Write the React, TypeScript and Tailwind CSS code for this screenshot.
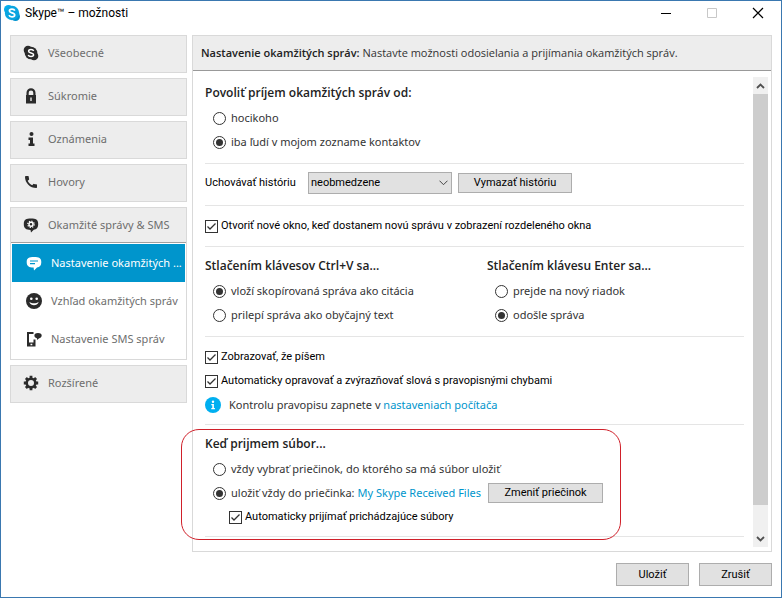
import type { ReactNode } from "react";
import { MdCall } from "react-icons/md";

function SkypeIcon() {
  return (
    <svg width="16" height="16" viewBox="0 0 16 16">
      <circle cx="5" cy="5" r="4.300" fill="#2b2b2b" />
      <circle cx="11" cy="11" r="4.300" fill="#2b2b2b" />
      <circle cx="8" cy="8" r="6.300" fill="#2b2b2b" />
      <path
        d="M10.700 5.900C10.200 4.900 9.300 4.600 8 4.600c-1.400 0-2.400.5-2.400 1.600 0 2.300 5 1.200 5 3.600 0 1.200-1.200 1.700-2.600 1.700-1.500 0-2.400-.5-2.800-1.600"
        fill="none"
        stroke="#fff"
        strokeWidth="1.500"
      />
    </svg>
  );
}

function LockIcon() {
  return (
    <svg width="16" height="16" viewBox="0 0 16 16" fill="#2b2b2b">
      <path
        fillRule="evenodd"
        d="M3.500 7V4.800a4.500 4.500 0 0 1 9 0V7h.5v8.500H3V7zM5.700 7h4.600V4.800a2.300 2.300 0 0 0-4.600 0zM7.300 9.500v3.500h1.400V9.500z"
      />
    </svg>
  );
}

function InfoIcon() {
  return (
    <svg width="16" height="16" viewBox="0 0 16 16" fill="#2b2b2b">
      <circle cx="8.500" cy="3" r="2" />
      <path d="M5.500 6.500H10v6h1.500V15h-6v-2.500H7V9H5.500z" />
    </svg>
  );
}

function BubbleGearIcon() {
  return (
    <svg width="16" height="16" viewBox="0 0 16 16">
      <path
        d="M8 1.500c4.800 0 7.200 1 7.200 5.700 0 3.500-1.600 5.100-4.400 5.500L8 15.500l-.5-2.600C3 12.800.8 11.200.8 7.200.8 2.500 3.200 1.500 8 1.500z"
        fill="#2b2b2b"
      />
      <circle cx="8" cy="7.300" r="2" fill="none" stroke="#fff" strokeWidth="1.400" />
      <circle cx="8" cy="7.300" r="3.200" fill="none" stroke="#fff" strokeWidth="1.200" strokeDasharray="1.250 1.263" />
    </svg>
  );
}

function BubbleIcon() {
  return (
    <svg width="16" height="16" viewBox="0 0 16 16">
      <path
        d="M8 2c5 0 7.300 1 7.300 5.200 0 3.500-1.600 4.900-4.300 5.200L8 15.500l-.4-3C2.800 12.500.7 11 .7 7.200.7 3 3 2 8 2z"
        fill="#fff"
      />
      <path d="M4 6h8M4 8.700h5" stroke="#0095cc" strokeWidth="1.200" />
    </svg>
  );
}

function SmileyIcon() {
  return (
    <svg width="16" height="16" viewBox="0 0 16 16">
      <circle cx="8" cy="8" r="8" fill="#2b2b2b" />
      <circle cx="5.300" cy="5.700" r="1.300" fill="#fff" />
      <circle cx="10.700" cy="5.700" r="1.300" fill="#fff" />
      <path d="M3.300 9c1.500 4.300 7.900 4.300 9.400 0-2.700 1.700-6.700 1.700-9.400 0z" fill="#fff" />
    </svg>
  );
}

function PhoneBubbleIcon() {
  return (
    <svg width="16" height="16" viewBox="0 0 16 16" fill="#2b2b2b">
      <path
        fillRule="evenodd"
        d="M1 1h6.500v2H3v8.500h4.500V8.500h2v7H1zM4.500 12.700v1.500h1.800v-1.500z"
      />
      <path d="M12 2c2.700 0 3.700 1 3.700 2.600S14.500 7.100 13.200 7.200L11 9l-.1-1.800C9.200 6.900 8.400 6.100 8.400 4.600 8.400 3 9.300 2 12 2z" />
    </svg>
  );
}

function GearIcon() {
  return (
    <svg width="16" height="16" viewBox="0 0 16 16" fill="none" stroke="#2b2b2b">
      <circle cx="8" cy="8" r="4.300" strokeWidth="2.600" />
      <path
        d="M8 .8v2.500M8 12.700v2.500M.8 8h2.500M12.700 8h2.500M2.900 2.900l1.800 1.800M11.300 11.300l1.800 1.800M2.900 13.100l1.800-1.800M11.300 4.700l1.800-1.800"
        strokeWidth="2.800"
      />
    </svg>
  );
}

function NavItem({ icon, children }: { icon: ReactNode; children: ReactNode }) {
  return (
    <button
      type="button"
      className="flex h-[38px] w-full shrink-0 items-center gap-[9px] border border-[#d9d9d9] bg-[#ededed] pb-0.5 pl-3 text-left text-[#6e6e6e]"
    >
      <span className="flex w-4 justify-center">{icon}</span>
      {children}
    </button>
  );
}

function SubItem({ icon, active, children }: { icon: ReactNode; active?: boolean; children: ReactNode }) {
  return (
    <button
      type="button"
      className={`flex h-[38px] w-full items-center gap-[9px] pl-[14px] text-left whitespace-nowrap ${
        active ? "bg-[#0095cc] text-white" : "text-[#6e6e6e]"
      }`}
    >
      <span className="flex w-4 shrink-0 justify-center">{icon}</span>
      {children}
    </button>
  );
}

function Radio({ name, checked, children }: { name: string; checked?: boolean; children: ReactNode }) {
  return (
    <label className="flex h-6 items-center gap-[5px] pl-2 whitespace-nowrap text-[#333]">
      <input
        type="radio"
        name={name}
        defaultChecked={checked}
        className="grid size-[13px] shrink-0 appearance-none place-content-center rounded-full border border-[#333] bg-white before:size-[7px] before:rounded-full checked:before:bg-[#333]"
      />
      {children}
    </label>
  );
}

function Check({ children }: { children: ReactNode }) {
  return (
    <label className="flex h-6 items-center gap-[3px] font-['Roboto',sans-serif] whitespace-nowrap text-black">
      <span className="grid shrink-0">
        <input
          type="checkbox"
          defaultChecked
          className="peer col-start-1 row-start-1 size-[13px] appearance-none border border-[#333] bg-white"
        />
        <svg
          width="13"
          height="13"
          viewBox="0 0 13 13"
          className="pointer-events-none invisible col-start-1 row-start-1 peer-checked:visible"
        >
          <path d="M2.500 6.500L5 9l5.500-5.500" fill="none" stroke="#333" strokeWidth="1.300" />
        </svg>
      </span>
      {children}
    </label>
  );
}

function Heading({ children }: { children: ReactNode }) {
  return (
    <h2 className="flex h-[25px] items-center pb-0.5 font-['Open_Sans',sans-serif] text-xs font-semibold whitespace-nowrap text-[#222]">
      {children}
    </h2>
  );
}

function PushButton({ className, children }: { className: string; children: ReactNode }) {
  return (
    <button
      type="button"
      className={`flex shrink-0 items-center justify-center border border-[#adadad] bg-[#e1e1e1] font-['Roboto',sans-serif] whitespace-nowrap text-black ${className}`}
    >
      {children}
    </button>
  );
}

export default function App() {
  return (
    <div className="flex min-h-screen flex-col border border-[#3a78b0] bg-white font-['Noto_Sans','Open_Sans',sans-serif] text-[11px] leading-4">
      {/* title bar */}
      <header className="flex h-[34px] items-start justify-between pr-[17px] pl-[3px]">
        <div className="flex h-6 items-center gap-[5px]">
          <svg width="16" height="16" viewBox="0 0 16 16">
            <circle cx="4.500" cy="4.500" r="4.500" fill="#00aff0" />
            <circle cx="11.500" cy="11.500" r="4.500" fill="#0093cf" />
            <circle cx="8" cy="8" r="7.200" fill="#0aa5e0" />
            <path
              d="M10.800 5.700C10.300 4.500 9.300 4.200 8 4.200c-1.500 0-2.600.6-2.600 1.800 0 2.500 5.300 1.300 5.300 4 0 1.300-1.200 1.900-2.700 1.900-1.600 0-2.600-.6-2.900-1.800"
              fill="none"
              stroke="#fff"
              strokeWidth="1.700"
            />
          </svg>
          <h1 className="font-['Roboto',sans-serif] text-xs text-black">Skype™ – možnosti</h1>
        </div>
        <div className="flex h-6 items-center gap-[34px]">
          <button type="button" aria-label="Minimalizovať">
            <svg width="12" height="12" viewBox="0 0 12 12">
              <path d="M1 6.500h10" stroke="#000" />
            </svg>
          </button>
          <button type="button" aria-label="Maximalizovať" disabled>
            <svg width="12" height="12" viewBox="0 0 12 12">
              <path d="M1.500 1.500h9v9h-9z" fill="none" stroke="#c8c8c8" />
            </svg>
          </button>
          <button type="button" aria-label="Zavrieť">
            <svg width="12" height="12" viewBox="0 0 12 12">
              <path d="M1 1l10 10M11 1L1 11" stroke="#000" strokeWidth="1.200" />
            </svg>
          </button>
        </div>
      </header>

      <div className="flex grow gap-[5px] pr-[9px] pl-[9px]">
        {/* sidebar */}
        <nav className="flex w-[177px] shrink-0 flex-col gap-[5px]">
          <NavItem icon={<SkypeIcon />}>Všeobecné</NavItem>
          <NavItem icon={<LockIcon />}>Súkromie</NavItem>
          <NavItem icon={<InfoIcon />}>Oznámenia</NavItem>
          <NavItem icon={<MdCall size={16} color="#2b2b2b" />}>Hovory</NavItem>
          <div className="border border-[#d9d9d9]">
            <button
              type="button"
              className="flex h-[35px] w-full items-center gap-[9px] border-b border-[#a0a0a0] bg-[#ededed] pl-3 text-left text-[#6e6e6e]"
            >
              <BubbleGearIcon />
              Okamžité správy &amp; SMS
            </button>
            <div className="px-px pt-px pb-px">
              <SubItem icon={<BubbleIcon />} active>
                Nastavenie okamžitých ...
              </SubItem>
              <SubItem icon={<SmileyIcon />}>Vzhľad okamžitých správ</SubItem>
              <SubItem icon={<PhoneBubbleIcon />}>Nastavenie SMS správ</SubItem>
            </div>
          </div>
          <NavItem icon={<GearIcon />}>Rozšírené</NavItem>
        </nav>

        {/* settings panel */}
        <main className="flex min-w-0 grow flex-col border border-[#d9d9d9]">
          <p className="flex h-[35px] shrink-0 items-center gap-[3px] border-b border-[#999] bg-[#ededed] pl-2 font-['Open_Sans',sans-serif] whitespace-nowrap text-[#333]">
            <b className="font-semibold text-[#222]">Nastavenie okamžitých správ:</b>
            Nastavte možnosti odosielania a prijímania okamžitých správ.
          </p>
          <div className="flex grow justify-between pr-[3px] pl-3">
            <form className="mr-[9px] grow">
              <section className="border-b border-[#e5e5e5] pt-[10px] pb-[9px]">
                <Heading>Povoliť príjem okamžitých správ od:</Heading>
                <Radio name="allow">hocikoho</Radio>
                <Radio name="allow" checked>
                  iba ľudí v mojom zozname kontaktov
                </Radio>
              </section>

              <section className="flex items-center border-b border-[#e5e5e5] pt-2 pb-[11px] font-['Roboto',sans-serif] text-black">
                <label htmlFor="history" className="w-[103px] shrink-0 whitespace-nowrap">
                  Uchovávať históriu
                </label>
                <div className="grid w-36 shrink-0 items-center">
                  <select
                    id="history"
                    className="col-start-1 row-start-1 h-[22px] w-full appearance-none border border-[#adadad] bg-[#e1e1e1] pl-[2px]"
                  >
                    <option>neobmedzene</option>
                  </select>
                  <svg
                    width="9"
                    height="6"
                    viewBox="0 0 9 6"
                    className="pointer-events-none col-start-1 row-start-1 mr-1 justify-self-end"
                  >
                    <path d="M.5 .7l4 4 4-4" fill="none" stroke="#444" />
                  </svg>
                </div>
                <PushButton className="ml-[6px] h-5 w-[114px]">Vymazať históriu</PushButton>
              </section>

              <section className="border-b border-[#e5e5e5] py-2">
                <Check>Otvoriť nové okno, keď dostanem novú správu v zobrazení rozdeleného okna</Check>
              </section>

              <section className="flex border-b border-[#e5e5e5] pt-[7px] pb-[9px]">
                <div className="w-[282px] shrink-0">
                  <Heading>Stlačením klávesov Ctrl+V sa...</Heading>
                  <Radio name="paste" checked>
                    vloží skopírovaná správa ako citácia
                  </Radio>
                  <Radio name="paste">prilepí správa ako obyčajný text</Radio>
                </div>
                <div>
                  <Heading>Stlačením klávesu Enter sa...</Heading>
                  <Radio name="enter">prejde na nový riadok</Radio>
                  <Radio name="enter" checked>
                    odošle správa
                  </Radio>
                </div>
              </section>

              <section className="border-b border-[#e5e5e5] pt-2 pb-[7px]">
                <Check>Zobrazovať, že píšem</Check>
                <Check>Automaticky opravovať a zvýrazňovať slová s pravopisnými chybami</Check>
                <p className="flex h-6 items-center gap-2 whitespace-nowrap text-[#333]">
                  <svg width="16" height="16" viewBox="0 0 16 16">
                    <circle cx="8" cy="8" r="8" fill="#00aff0" />
                    <circle cx="8" cy="4.700" r="1.200" fill="#fff" />
                    <path d="M6.300 7h2.600v4h1v1.300H6.300V11h1V8.300h-1z" fill="#fff" />
                  </svg>
                  <span>
                    Kontrolu pravopisu zapnete v{" "}
                    <a href="#" className="text-[#0095cc]">
                      nastaveniach počítača
                    </a>
                  </span>
                </p>
              </section>

              <section className="relative border-b border-[#e5e5e5] py-[7px]">
                <Heading>Keď prijmem súbor...</Heading>
                <Radio name="file">vždy vybrať priečinok, do ktorého sa má súbor uložiť</Radio>
                <div className="flex items-center">
                  <Radio name="file" checked>
                    uložiť vždy do priečinka:
                  </Radio>
                  <a href="#" className="ml-[3px] whitespace-nowrap text-[#0095cc]">
                    My Skype Received Files
                  </a>
                  <PushButton className="ml-[7px] h-5 w-[115px]">Zmeniť priečinok</PushButton>
                </div>
                <div className="pl-6">
                  <Check>Automaticky prijímať prichádzajúce súbory</Check>
                </div>
                {/* red highlight around the file options */}
                <div className="pointer-events-none absolute top-1 -bottom-1 -left-6 w-[440px] rounded-[18px] border border-[#d0202a]" />
              </section>
            </form>

            {/* scrollbar */}
            <div className="mt-[6px] mb-1 flex w-[15px] shrink-0 flex-col bg-[#f0f0f0]">
              <button type="button" aria-label="Nahor" className="flex h-[17px] items-center justify-center">
                <svg width="9" height="6" viewBox="0 0 9 6">
                  <path d="M1 5l3.500-3.500L8 5" fill="none" stroke="#505050" strokeWidth="1.800" />
                </svg>
              </button>
              <div className="grow bg-[#cdcdcd]" />
              <button type="button" aria-label="Nadol" className="flex h-[42px] items-end justify-center pb-[5px]">
                <svg width="9" height="6" viewBox="0 0 9 6">
                  <path d="M1 1l3.500 3.500L8 1" fill="none" stroke="#505050" strokeWidth="1.800" />
                </svg>
              </button>
            </div>
          </div>
        </main>
      </div>

      <footer className="flex justify-end gap-[10px] pt-[11px] pr-[9px] pb-[11px]">
        <PushButton className="h-[23px] w-[73px]">Uložiť</PushButton>
        <PushButton className="h-[23px] w-[73px]">Zrušiť</PushButton>
      </footer>
    </div>
  );
}
